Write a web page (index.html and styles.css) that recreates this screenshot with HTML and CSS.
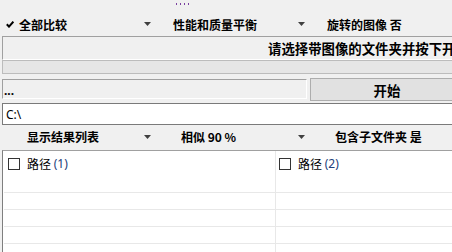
FILE: index.html
```html
<!DOCTYPE html>
<html lang="zh-CN">
<head>
    <meta charset="UTF-8">
    <title>图像比较</title>
    <link rel="stylesheet" href="styles.css">
</head>
<body>
    <div class="window">
        <div class="grip"><span></span><span></span><span></span><span></span></div>

        <div class="opts">
            <div class="opt">
                <span class="mark"><svg width="8" height="7" viewBox="0 0 8 7"><polyline points="0.8,3.2 3,5.6 7.4,0.6" fill="none" stroke="#000" stroke-width="2"/></svg></span>
                <span class="label">全部比较</span>
                <svg class="arrow" width="7" height="4" viewBox="0 0 7 4"><polygon points="0,0 7,0 3.5,4" fill="#404040"/></svg>
            </div>
            <div class="opt">
                <span class="mark"></span>
                <span class="label">性能和质量平衡</span>
                <svg class="arrow" width="7" height="4" viewBox="0 0 7 4"><polygon points="0,0 7,0 3.5,4" fill="#404040"/></svg>
            </div>
            <div class="opt">
                <span class="mark"></span>
                <span class="label">旋转的图像 否</span>
            </div>
        </div>

        <div class="status">请选择带图像的文件夹并按下开始按钮</div>
        <div class="progress"></div>

        <div class="run-row">
            <div class="info">...</div>
            <button class="start">开始</button>
        </div>

        <input class="path" type="text" value="C:\">

        <div class="opts lower">
            <div class="opt">
                <span class="label">显示结果列表</span>
                <svg class="arrow" width="7" height="4" viewBox="0 0 7 4"><polygon points="0,0 7,0 3.5,4" fill="#404040"/></svg>
            </div>
            <div class="opt">
                <span class="label">相似 90 %</span>
                <svg class="arrow" width="7" height="4" viewBox="0 0 7 4"><polygon points="0,0 7,0 3.5,4" fill="#404040"/></svg>
            </div>
            <div class="opt">
                <span class="label">包含子文件夹 是</span>
            </div>
        </div>

        <div class="list">
            <div class="row head">
                <div class="cell"><span class="box"></span>路径 <span class="num">(1)</span></div>
                <div class="cell"><span class="box"></span>路径 <span class="num">(2)</span></div>
            </div>
            <div class="row"><div class="cell"></div><div class="cell"></div></div>
            <div class="row"><div class="cell"></div><div class="cell"></div></div>
            <div class="row"><div class="cell"></div><div class="cell"></div></div>
            <div class="row"><div class="cell"></div><div class="cell"></div></div>
        </div>
    </div>
</body>
</html>
```

FILE: styles.css
```css
* {
    margin: 0;
    padding: 0;
    box-sizing: border-box;
}

html, body {
    width: 100%;
    height: 100%;
}

body {
    font-family: "Noto Sans", "Noto Sans CJK SC", sans-serif;
    font-size: 12px;
    color: #000;
    background-color: #f0f0f0;
    overflow: hidden;
}

.window {
    width: 470px;
}

.grip {
    height: 12px;
    display: flex;
    gap: 3px;
    padding: 3px 0 0 176px;
}

.grip span {
    width: 1px;
    height: 2px;
    background-color: #7a3fa0;
}

.opts {
    height: 24px;
    display: grid;
    grid-template-columns: 154px 154px 154px;
}

.opt {
    display: flex;
    align-items: center;
    padding: 0 3px 0 6px;
    font-family: "Noto Sans CJK SC", sans-serif;
    font-weight: bold;
}

.mark {
    width: 13px;
    display: flex;
    align-items: center;
}

.label {
    white-space: nowrap;
}

.arrow {
    margin-left: auto;
}

.opts.lower {
    height: 25px;
    padding-bottom: 2px;
}

.lower .opt {
    padding-left: 27px;
}

.status {
    height: 24px;
    margin-left: 2px;
    border-top: 1px solid #a0a0a0;
    border-left: 1px solid #a0a0a0;
    border-bottom: 1px solid #fff;
    padding-left: 265px;
    line-height: 22px;
    font-family: "Noto Sans CJK SC", sans-serif;
    font-size: 13.4px;
    font-weight: bold;
    white-space: nowrap;
    overflow: hidden;
}

.progress {
    height: 14px;
    margin-left: 2px;
    border: 1px solid #bcbcbc;
    background-color: #e6e6e6;
}

.run-row {
    height: 23px;
    margin-top: 4px;
    display: flex;
    align-items: flex-start;
    padding-left: 2px;
}

.info {
    width: 305px;
    height: 20px;
    margin-top: 1px;
    border-top: 1px solid #a0a0a0;
    border-left: 1px solid #a0a0a0;
    border-bottom: 1px solid #fff;
    border-right: 1px solid #fff;
    display: flex;
    align-items: flex-end;
    font-weight: bold;
    line-height: 14px;
    padding-left: 1px;
}

.start {
    width: 154px;
    height: 23px;
    margin-left: 3px;
    border: 1px solid #adadad;
    background-color: #e1e1e1;
    font-family: "Noto Sans CJK SC", sans-serif;
    font-size: 13.4px;
    font-weight: bold;
    color: #000;
}

.path {
    display: block;
    width: 468px;
    height: 22px;
    margin: 2px 0 0 2px;
    border: 1px solid #7a7a7a;
    background-color: #fff;
    padding-left: 3px;
    font-family: "Noto Sans", sans-serif;
    font-size: 12px;
    color: #000;
    outline: none;
}

.list {
    height: 110px;
    margin-left: 2px;
    border-top: 1px solid #a0a0a0;
    border-left: 1px solid #7f7f7f;
    background-color: #fff;
}

.row {
    display: grid;
    grid-template-columns: 271px 1fr;
    height: 17px;
    border-top: 1px solid #e8e8e8;
    margin-left: 1px;
}

.row.head {
    height: 41px;
    border-top: none;
}

.cell {
    display: flex;
    align-items: flex-start;
    padding: 6px 0 0 4px;
    font-family: "Noto Sans CJK SC", sans-serif;
    line-height: 14px;
    white-space: pre;
}

.row .cell + .cell {
    border-left: 1px solid #e8e8e8;
    padding-left: 3px;
}

.box {
    width: 12px;
    height: 12px;
    margin: 1px 7px 0 0;
    border: 1px solid #333;
    background-color: #fff;
}

.num {
    font-family: "Noto Sans", sans-serif;
    color: #22407a;
}
```
